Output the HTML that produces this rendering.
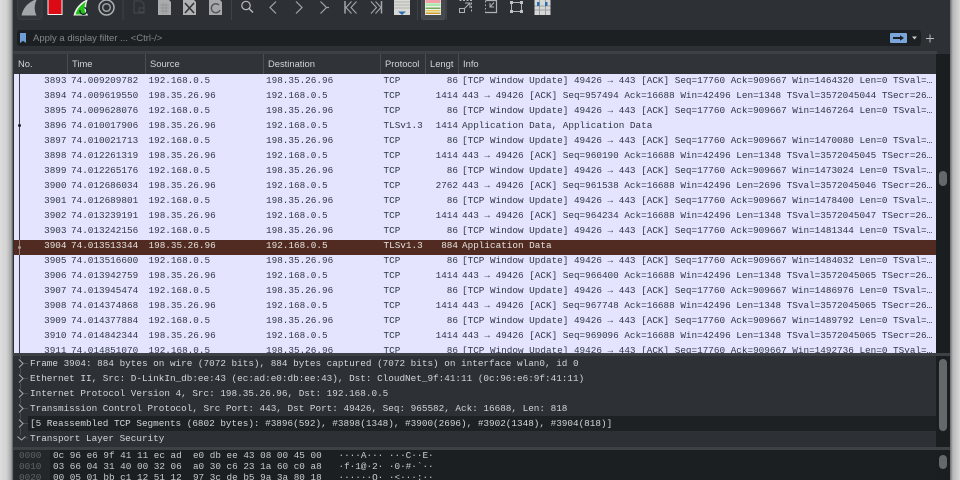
<!DOCTYPE html>
<html><head><meta charset="utf-8">
<style>
html,body{margin:0;padding:0;width:960px;height:480px;overflow:hidden;background:#2d3035}
*{box-sizing:border-box}
.a{position:absolute}
#wrap{position:absolute;left:0;top:0;width:960px;height:480px;overflow:hidden;background:#2d3035;filter:blur(.3px)}
.sf{font-family:"Liberation Sans",sans-serif}
.hd{position:absolute;top:54px;height:20px;font:9.4px/20px "Liberation Sans",sans-serif;color:#d0d3d6;border-right:1px solid #4a4e53;padding-left:4px;white-space:nowrap;overflow:hidden}
#list{position:absolute;left:14px;top:74px;width:922px;height:279px;background:#e4e4ff;overflow:hidden}
.r{position:absolute;left:0;width:922px;height:15px;line-height:13px;color:#2e3644;font-family:"Liberation Mono",monospace;font-size:9.33px;white-space:pre}
.r span{position:absolute;top:0}
.r .n{left:0;width:52.5px;text-align:right}
.r .t{left:57px}.r .s{left:134.5px}.r .d{left:252px}.r .p{left:369.5px}
.r .l{left:392px;width:52px;text-align:right}
.r .i{left:448px;width:474px;overflow:hidden}
.r.sel{background:#512b22;color:#e6e2de;line-height:11px}
.dr{position:absolute;left:30px;height:15px;line-height:15px;color:#d2d5d8;font-family:"Liberation Mono",monospace;font-size:9.33px;white-space:pre}
.hx{position:absolute;height:11px;line-height:11px;font-family:"Liberation Mono",monospace;font-size:9.33px;white-space:pre;color:#c8cbce}
</style></head><body>
<div id="wrap">

<!-- left and right window edges -->
<div class="a" style="left:0;top:0;width:13px;height:480px;background:linear-gradient(90deg,#dcdcdc 0,#d2d2d2 50%,#a8a8a8 85%,#55575a 100%)"></div>
<div class="a" style="left:950px;top:0;width:10px;height:480px;background:linear-gradient(90deg,#6a6d70 0,#b8b8b8 30%,#d8d8d8 100%)"></div>

<!-- toolbar -->
<svg class="a" style="left:13px;top:0" width="575" height="24" viewBox="13 0 575 24">
  <rect x="17.500" y="-3" width="24.500" height="22.500" rx="3" fill="#33373b" stroke="#3a3e43"/>
  <path d="M21.500 15.500C23 8 28 2 37 -1C34 5 34 10 36.500 15.500Z" fill="#a3a6a8"/>
  <rect x="47.500" y="-1" width="15" height="16" fill="#f0f0f0"/>
  <rect x="48.500" y="0" width="13" height="14" fill="#dc0a14"/>
  <path d="M73.500 15.500C75 9 79 3 88 -1C85.500 5 85.500 10 88 15.500Z" fill="#f0f0f0"/>
  <path d="M75.500 14.500C77 9 80.500 5 86 1.500C84 6 84 10 86 14.500Z" fill="#21c417"/>
  <path d="M84.500 7.500A3.500 3.500 0 1 1 80 10" fill="none" stroke="#123" stroke-width="1.300"/>
  <circle cx="106.500" cy="7.500" r="7.500" fill="none" stroke="#aeb1b3" stroke-width="1.500"/>
  <circle cx="106.500" cy="7.500" r="3.800" fill="none" stroke="#9ea1a3" stroke-width="1.500"/>
  <path d="M123 0V20" stroke="#3f4347"/>
  <path d="M134 1H141L144 4V13H134Z" fill="none" stroke="#45494d"/>
  <rect x="139" y="8" width="5" height="4" fill="#2d3035" stroke="#45494d"/>
  <path d="M158 -1H168L171 2V15H158Z" fill="#a9abac"/>
  <path d="M160 5H169M160 8H169M160 11H169M163 3V14M166 3V14" stroke="#8b8d8f" stroke-width=".7"/>
  <path d="M183 -1H193L196 2V15H183Z" fill="#b0b2b3"/>
  <path d="M185 3L194 13M194 3L185 13" stroke="#33363a" stroke-width="1.600"/>
  <path d="M209 -1H219L222 2V15H209Z" fill="#a6a8aa"/>
  <path d="M219 5A4.500 4.500 0 1 0 220 10" fill="none" stroke="#55585b" stroke-width="1.500"/>
  <path d="M231.500 0V20" stroke="#3f4347"/>
  <circle cx="246" cy="5.500" r="4.200" fill="none" stroke="#b8babc" stroke-width="1.200"/>
  <path d="M249 8.500L253 12.500" stroke="#b8babc" stroke-width="1.400"/>
  <path d="M276 1.500L270 7.500L276 13.500" fill="none" stroke="#a4a7aa" stroke-width="1.200"/>
  <path d="M296 1.500L302 7.500L296 13.500" fill="none" stroke="#a4a7aa" stroke-width="1.200"/>
  <path d="M320.500 1.500L326.500 7.500L320.500 13.500" fill="none" stroke="#a4a7aa" stroke-width="1.200"/>
  <path d="M327 7.500H329" stroke="#a4a7aa" stroke-width="1.200"/>
  <path d="M345 1V13.500" stroke="#a4a7aa" stroke-width="1.500"/>
  <path d="M351.500 1.500L346 7.500L351.500 13.500M356.500 1.500L351 7.500L356.500 13.500" fill="none" stroke="#a4a7aa" stroke-width="1.100"/>
  <path d="M381.500 1V13.500" stroke="#a4a7aa" stroke-width="1.500"/>
  <path d="M371 1.500L376.500 7.500L371 13.500M375.500 1.500L381 7.500L375.500 13.500" fill="none" stroke="#a4a7aa" stroke-width="1.100"/>
  <rect x="394" y="-1" width="16" height="16" fill="#d8d8d4"/>
  <path d="M394 2H410M394 5H410M394 8H410" stroke="#a8a8a4" stroke-width=".8"/>
  <path d="M398 11.500H406L402 15Z" fill="#2a6cb0"/>
  <path d="M417.500 0V20M446.500 0V20" stroke="#3f4347"/>
  <rect x="421.500" y="-3" width="23.500" height="22.500" rx="2" fill="#46494e" stroke="#4c5055"/>
  <rect x="425" y="-1" width="16" height="16" fill="#eeeeee"/>
  <rect x="425.500" y="0" width="15" height="3" fill="#f2a0a8"/>
  <rect x="425.500" y="3.500" width="15" height="2.500" fill="#a8e8a8"/>
  <rect x="425.500" y="7.500" width="15" height="1.500" fill="#77aa55"/>
  <rect x="425.500" y="10" width="15" height="1.500" fill="#e8c850"/>
  <rect x="425.500" y="12.500" width="15" height="1.500" fill="#c8a030"/>
  <g fill="none" stroke="#b0b3b5" stroke-width="1">
    <path d="M459.500 .5H471.500V12.500" stroke-dasharray="2 1.500"/>
    <path d="M465 3H470V8M470 3L464.500 8.500"/>
    <rect x="459.500" y="8.500" width="5" height="4"/>
    <path d="M485.500 .5H496.500V12.500H485" stroke-width="1.200"/>
    <path d="M485.500 1V12" stroke-dasharray="1.500 2"/>
    <path d="M491 3.500V7.500H495M495 3L491 7.500" transform="translate(-1 -.5)"/>
    <rect x="511.500" y="2.500" width="10" height="9"/>
  </g>
  <g fill="#c0c3c5"><rect x="510" y="1" width="3" height="3"/><rect x="520" y="1" width="3" height="3"/><rect x="510" y="10" width="3" height="3"/><rect x="520" y="10" width="3" height="3"/></g>
  <rect x="534.500" y="-1" width="16" height="16" fill="#d5d6d6"/>
  <path d="M539.500 -1V15M545.500 -1V15M534.500 6H550.500M534.500 10H550.500" stroke="#8f9193" stroke-width=".8"/>
  <rect x="537" y="2" width="2.500" height="4" fill="#2a6cb0"/><rect x="545" y="2" width="2.500" height="4" fill="#2a6cb0"/>
</svg>

<!-- filter bar -->
<div class="a" style="left:17px;top:30px;width:904px;height:16px;background:#1d2023;border-radius:3px"></div>
<svg class="a" style="left:20px;top:33px" width="7" height="11" viewBox="0 0 7 11"><path d="M0 0H6V10L3 7.800L0 10Z" fill="#6d9fd6"/></svg>
<div class="a sf" style="left:33px;top:31px;height:15px;font-size:9.5px;line-height:15px;color:#83878b;white-space:nowrap">Apply a display filter ... &lt;Ctrl-/&gt;</div>
<div class="a" style="left:890px;top:33px;width:17px;height:10px;background:#7aa6dc;border-radius:1px"></div>
<svg class="a" style="left:890px;top:33px" width="34" height="11" viewBox="0 0 34 11">
  <path d="M3 4H10V2.200L14 5L10 7.800V6H3Z" fill="#1a2026"/>
  <path d="M22 3.500H27L24.500 6.500Z" fill="#c8cbcd"/>
</svg>
<svg class="a" style="left:925px;top:33px" width="10" height="11" viewBox="0 0 10 11"><path d="M5 1.500V9.500M1 5.500H9" stroke="#b8bbbd" stroke-width="1"/></svg>

<!-- header -->
<div class="a" style="left:13px;top:51px;width:924px;height:3px;background:#3d4146"></div>
<div class="a" style="left:13px;top:54px;width:923px;height:20px;background:#303338"></div>
<div class="hd" style="left:14px;width:54px">No.</div>
<div class="hd" style="left:68px;width:78px">Time</div>
<div class="hd" style="left:146px;width:118px">Source</div>
<div class="hd" style="left:264px;width:117px">Destination</div>
<div class="hd" style="left:381px;width:45px">Protocol</div>
<div class="hd" style="left:426px;width:33px">Lengt</div>
<div class="hd" style="left:459px;width:100px;border:0">Info</div>

<!-- packet list -->
<div id="list">
<div class="r" style="top:0"><span class="n">3893</span><span class="t">74.009209782</span><span class="s">192.168.0.5</span><span class="d">198.35.26.96</span><span class="p">TCP</span><span class="l">86</span><span class="i">[TCP Window Update] 49426 → 443 [ACK] Seq=17760 Ack=909667 Win=1464320 Len=0 TSval=…</span></div>
<div class="r" style="top:15px"><span class="n">3894</span><span class="t">74.009619550</span><span class="s">198.35.26.96</span><span class="d">192.168.0.5</span><span class="p">TCP</span><span class="l">1414</span><span class="i">443 → 49426 [ACK] Seq=957494 Ack=16688 Win=42496 Len=1348 TSval=3572045044 TSecr=26…</span></div>
<div class="r" style="top:30px"><span class="n">3895</span><span class="t">74.009628076</span><span class="s">192.168.0.5</span><span class="d">198.35.26.96</span><span class="p">TCP</span><span class="l">86</span><span class="i">[TCP Window Update] 49426 → 443 [ACK] Seq=17760 Ack=909667 Win=1467264 Len=0 TSval=…</span></div>
<div class="r" style="top:45px"><span class="n">3896</span><span class="t">74.010017906</span><span class="s">198.35.26.96</span><span class="d">192.168.0.5</span><span class="p">TLSv1.3</span><span class="l">1414</span><span class="i">Application Data, Application Data</span></div>
<div class="r" style="top:60px"><span class="n">3897</span><span class="t">74.010021713</span><span class="s">192.168.0.5</span><span class="d">198.35.26.96</span><span class="p">TCP</span><span class="l">86</span><span class="i">[TCP Window Update] 49426 → 443 [ACK] Seq=17760 Ack=909667 Win=1470080 Len=0 TSval=…</span></div>
<div class="r" style="top:75px"><span class="n">3898</span><span class="t">74.012261319</span><span class="s">198.35.26.96</span><span class="d">192.168.0.5</span><span class="p">TCP</span><span class="l">1414</span><span class="i">443 → 49426 [ACK] Seq=960190 Ack=16688 Win=42496 Len=1348 TSval=3572045045 TSecr=26…</span></div>
<div class="r" style="top:90px"><span class="n">3899</span><span class="t">74.012265176</span><span class="s">192.168.0.5</span><span class="d">198.35.26.96</span><span class="p">TCP</span><span class="l">86</span><span class="i">[TCP Window Update] 49426 → 443 [ACK] Seq=17760 Ack=909667 Win=1473024 Len=0 TSval=…</span></div>
<div class="r" style="top:105px"><span class="n">3900</span><span class="t">74.012686034</span><span class="s">198.35.26.96</span><span class="d">192.168.0.5</span><span class="p">TCP</span><span class="l">2762</span><span class="i">443 → 49426 [ACK] Seq=961538 Ack=16688 Win=42496 Len=2696 TSval=3572045046 TSecr=26…</span></div>
<div class="r" style="top:120px"><span class="n">3901</span><span class="t">74.012689801</span><span class="s">192.168.0.5</span><span class="d">198.35.26.96</span><span class="p">TCP</span><span class="l">86</span><span class="i">[TCP Window Update] 49426 → 443 [ACK] Seq=17760 Ack=909667 Win=1478400 Len=0 TSval=…</span></div>
<div class="r" style="top:135px"><span class="n">3902</span><span class="t">74.013239191</span><span class="s">198.35.26.96</span><span class="d">192.168.0.5</span><span class="p">TCP</span><span class="l">1414</span><span class="i">443 → 49426 [ACK] Seq=964234 Ack=16688 Win=42496 Len=1348 TSval=3572045047 TSecr=26…</span></div>
<div class="r" style="top:150px"><span class="n">3903</span><span class="t">74.013242156</span><span class="s">192.168.0.5</span><span class="d">198.35.26.96</span><span class="p">TCP</span><span class="l">86</span><span class="i">[TCP Window Update] 49426 → 443 [ACK] Seq=17760 Ack=909667 Win=1481344 Len=0 TSval=…</span></div>
<div class="r" style="top:180px"><span class="n">3905</span><span class="t">74.013516600</span><span class="s">192.168.0.5</span><span class="d">198.35.26.96</span><span class="p">TCP</span><span class="l">86</span><span class="i">[TCP Window Update] 49426 → 443 [ACK] Seq=17760 Ack=909667 Win=1484032 Len=0 TSval=…</span></div>
<div class="r sel" style="top:166px"><span class="n">3904</span><span class="t">74.013513344</span><span class="s">198.35.26.96</span><span class="d">192.168.0.5</span><span class="p">TLSv1.3</span><span class="l">884</span><span class="i">Application Data</span></div>
<div class="r" style="top:195px"><span class="n">3906</span><span class="t">74.013942759</span><span class="s">198.35.26.96</span><span class="d">192.168.0.5</span><span class="p">TCP</span><span class="l">1414</span><span class="i">443 → 49426 [ACK] Seq=966400 Ack=16688 Win=42496 Len=1348 TSval=3572045065 TSecr=26…</span></div>
<div class="r" style="top:210px"><span class="n">3907</span><span class="t">74.013945474</span><span class="s">192.168.0.5</span><span class="d">198.35.26.96</span><span class="p">TCP</span><span class="l">86</span><span class="i">[TCP Window Update] 49426 → 443 [ACK] Seq=17760 Ack=909667 Win=1486976 Len=0 TSval=…</span></div>
<div class="r" style="top:225px"><span class="n">3908</span><span class="t">74.014374868</span><span class="s">198.35.26.96</span><span class="d">192.168.0.5</span><span class="p">TCP</span><span class="l">1414</span><span class="i">443 → 49426 [ACK] Seq=967748 Ack=16688 Win=42496 Len=1348 TSval=3572045065 TSecr=26…</span></div>
<div class="r" style="top:240px"><span class="n">3909</span><span class="t">74.014377884</span><span class="s">192.168.0.5</span><span class="d">198.35.26.96</span><span class="p">TCP</span><span class="l">86</span><span class="i">[TCP Window Update] 49426 → 443 [ACK] Seq=17760 Ack=909667 Win=1489792 Len=0 TSval=…</span></div>
<div class="r" style="top:255px"><span class="n">3910</span><span class="t">74.014842344</span><span class="s">198.35.26.96</span><span class="d">192.168.0.5</span><span class="p">TCP</span><span class="l">1414</span><span class="i">443 → 49426 [ACK] Seq=969096 Ack=16688 Win=42496 Len=1348 TSval=3572045065 TSecr=26…</span></div>
<div class="r" style="top:270px"><span class="n">3911</span><span class="t">74.014851070</span><span class="s">192.168.0.5</span><span class="d">198.35.26.96</span><span class="p">TCP</span><span class="l">86</span><span class="i">[TCP Window Update] 49426 → 443 [ACK] Seq=17760 Ack=909667 Win=1492736 Len=0 TSval=…</span></div>
<!-- related packet line -->
<div class="a" style="left:5px;top:0;width:1px;height:166px;background:#3a3d44"></div>
<div class="a" style="left:5px;top:166px;width:1px;height:15px;background:#8d7d78"></div>
<div class="a" style="left:5px;top:181px;width:1px;height:98px;background:#3a3d44"></div>
<div class="a" style="left:4px;top:50px;width:3px;height:3px;border-radius:50%;background:#1c1f24"></div>
<div class="a" style="left:4px;top:172px;width:3px;height:3px;border-radius:50%;background:#a09a96"></div>
</div>

<!-- list scrollbar -->
<div class="a" style="left:936px;top:54px;width:14px;height:299px;background:#1b1e21"></div>
<div class="a" style="left:939px;top:171px;width:8px;height:15px;border-radius:4px;background:#64686b"></div>

<!-- splitter -->
<div class="a" style="left:13px;top:353px;width:937px;height:3px;background:#3d4146"></div>

<!-- details -->
<div class="a" style="left:14px;top:356px;width:922px;height:94px;background:#2d3035"></div>
<div class="a" style="left:28px;top:416px;width:908px;height:15px;background:#1e2124"></div>
<div class="dr" style="top:356px">Frame 3904: 884 bytes on wire (7072 bits), 884 bytes captured (7072 bits) on interface wlan0, id 0</div>
<div class="dr" style="top:371px">Ethernet II, Src: D-LinkIn_db:ee:43 (ec:ad:e0:db:ee:43), Dst: CloudNet_9f:41:11 (0c:96:e6:9f:41:11)</div>
<div class="dr" style="top:386px">Internet Protocol Version 4, Src: 198.35.26.96, Dst: 192.168.0.5</div>
<div class="dr" style="top:401px">Transmission Control Protocol, Src Port: 443, Dst Port: 49426, Seq: 965582, Ack: 16688, Len: 818</div>
<div class="dr" style="top:416px">[5 Reassembled TCP Segments (6802 bytes): #3896(592), #3898(1348), #3900(2696), #3902(1348), #3904(818)]</div>
<div class="dr" style="top:431px">Transport Layer Security</div>
<svg class="a" style="left:14px;top:356px" width="16" height="94" viewBox="0 0 16 94">
  <path d="M6.500 0V3M6.500 12V18M6.500 27V33M6.500 42V48M6.500 57V63M6.500 72V79" stroke="#4a4e52"/>
  <path d="M9 7.500H14M9 22.500H14M9 37.500H14M9 52.500H14M9 67.500H14M11.500 82H14" stroke="#4a4e52"/>
  <g fill="none" stroke="#a8abae" stroke-width="1">
    <path d="M5 3.500L9 7.500L5 11.500M5 18.500L9 22.500L5 26.500M5 33.500L9 37.500L5 41.500M5 48.500L9 52.500L5 56.500M5 63.500L9 67.500L5 71.500"/>
    <path d="M3.500 80.500L7.500 84L11.500 80.500"/>
  </g>
</svg>
<div class="a" style="left:936px;top:356px;width:14px;height:94px;background:#1b1e21"></div>
<div class="a" style="left:939px;top:359px;width:8px;height:72px;border-radius:4px;background:#64686b"></div>

<!-- splitter 2 -->
<div class="a" style="left:13px;top:447px;width:937px;height:3px;background:#3d4146"></div>

<!-- hex -->
<div class="a" style="left:14px;top:450px;width:922px;height:30px;background:#1c1f22"></div>
<div class="a" style="left:14px;top:450px;width:36px;height:30px;background:#24272a"></div>
<div class="hx" style="left:19px;top:450px;color:#5f6367">0000</div>
<div class="hx" style="left:53px;top:450px">0c 96 e6 9f 41 11 ec ad  e0 db ee 43 08 00 45 00   ····A··· ···C··E·</div>
<div class="hx" style="left:19px;top:461px;color:#5f6367">0010</div>
<div class="hx" style="left:53px;top:461px">03 66 04 31 40 00 32 06  a0 30 c6 23 1a 60 c0 a8   ·f·1@·2· ·0·#·`··</div>
<div class="hx" style="left:19px;top:472px;color:#5f6367">0020</div>
<div class="hx" style="left:53px;top:472px">00 05 01 bb c1 12 51 12  97 3c de b5 9a 3a 80 18   ······Q· ·&lt;···:··</div>
<div class="a" style="left:936px;top:450px;width:14px;height:30px;background:#1b1e21"></div>
<div class="a" style="left:939px;top:455px;width:8px;height:14px;border-radius:4px;background:#64686b"></div>

</div>
</body></html>
